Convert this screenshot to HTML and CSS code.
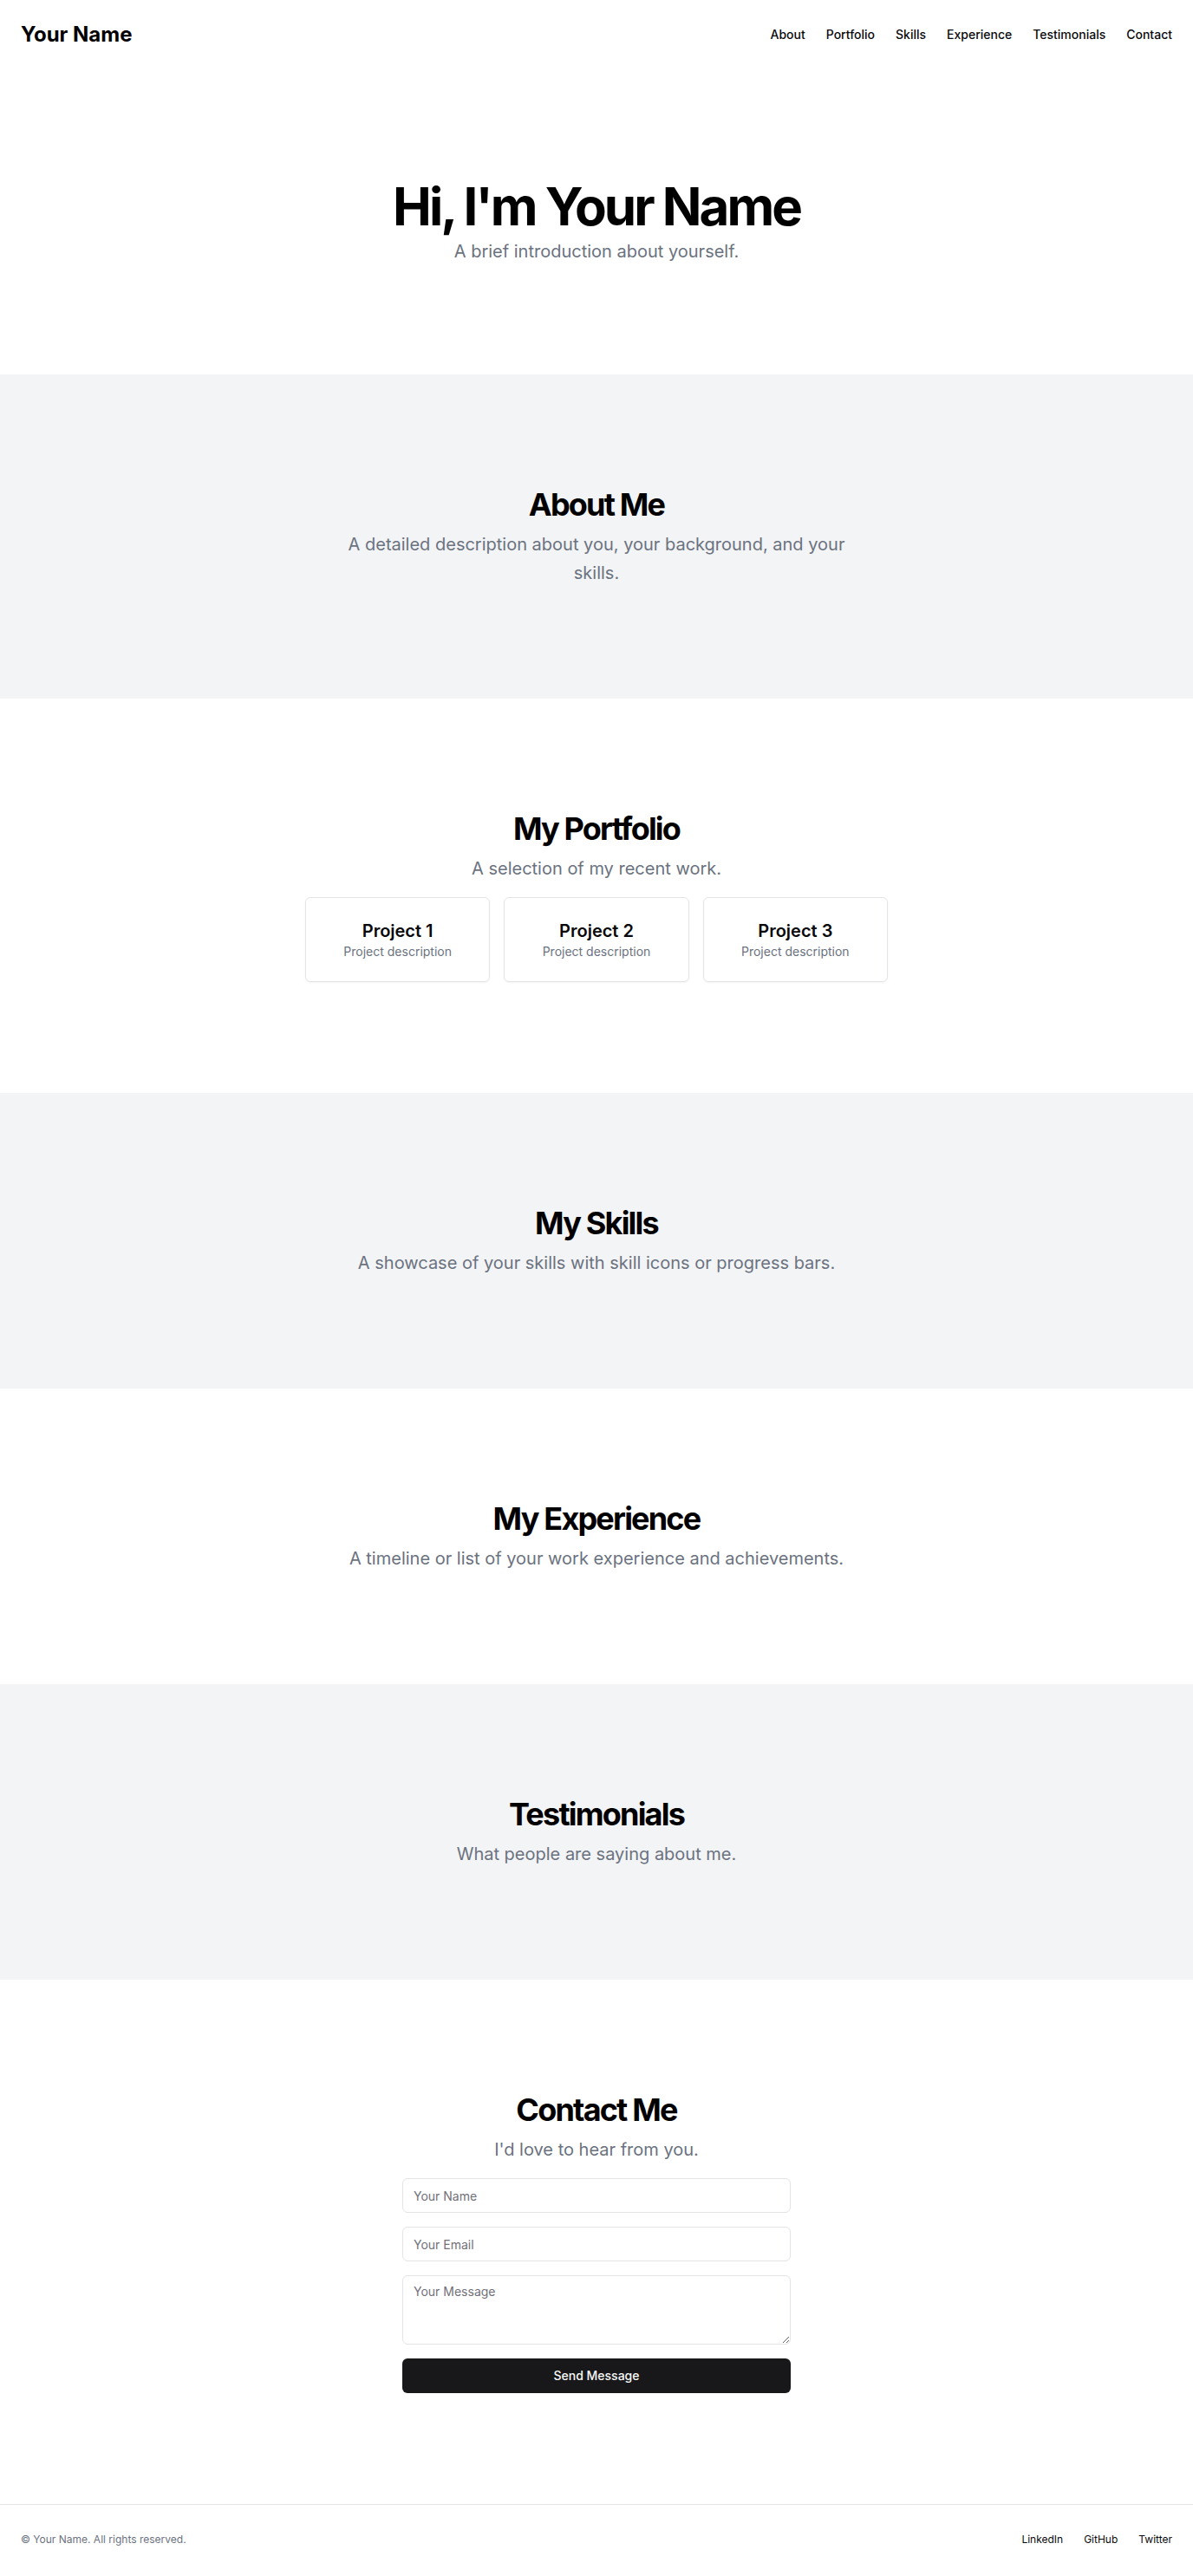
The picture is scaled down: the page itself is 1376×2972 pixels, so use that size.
FILE: index.html
```html
<!DOCTYPE html>
<html lang="en">
<head>
<meta charset="utf-8">
<meta name="viewport" content="width=device-width, initial-scale=1">
<title>Your Name</title>
<link rel="stylesheet" href="styles.css">
</head>
<body>
<header class="site-header">
  <a class="brand" href="#">Your Name</a>
  <nav class="nav">
    <a href="#about">About</a>
    <a href="#portfolio">Portfolio</a>
    <a href="#skills">Skills</a>
    <a href="#experience">Experience</a>
    <a href="#testimonials">Testimonials</a>
    <a href="#contact">Contact</a>
  </nav>
</header>
<main>
  <section class="section">
    <h1 class="hero-title">Hi, I'm Your Name</h1>
    <p class="hero-text">A brief introduction about yourself.</p>
  </section>
  <section class="section section-muted" id="about">
    <h2 class="title">About Me</h2>
    <p class="lead">A detailed description about you, your background, and your skills.</p>
  </section>
  <section class="section" id="portfolio">
    <h2 class="title">My Portfolio</h2>
    <p class="lead">A selection of my recent work.</p>
    <div class="projects">
      <article class="card"><h3 class="card-title">Project 1</h3><p class="card-text">Project description</p></article>
      <article class="card"><h3 class="card-title">Project 2</h3><p class="card-text">Project description</p></article>
      <article class="card"><h3 class="card-title">Project 3</h3><p class="card-text">Project description</p></article>
    </div>
  </section>
  <section class="section section-muted" id="skills">
    <h2 class="title">My Skills</h2>
    <p class="lead">A showcase of your skills with skill icons or progress bars.</p>
  </section>
  <section class="section" id="experience">
    <h2 class="title">My Experience</h2>
    <p class="lead">A timeline or list of your work experience and achievements.</p>
  </section>
  <section class="section section-muted" id="testimonials">
    <h2 class="title">Testimonials</h2>
    <p class="lead">What people are saying about me.</p>
  </section>
  <section class="section" id="contact">
    <h2 class="title">Contact Me</h2>
    <p class="lead">I'd love to hear from you.</p>
    <form class="form">
      <input class="field" type="text" placeholder="Your Name" aria-label="Your Name">
      <input class="field" type="email" placeholder="Your Email" aria-label="Your Email">
      <textarea class="field field-area" placeholder="Your Message" aria-label="Your Message"></textarea>
      <button class="submit" type="submit">Send Message</button>
    </form>
  </section>
</main>
<footer class="site-footer">
  <p class="copyright">© Your Name. All rights reserved.</p>
  <nav class="footer-nav">
    <a href="#">LinkedIn</a>
    <a href="#">GitHub</a>
    <a href="#">Twitter</a>
  </nav>
</footer>
</body>
</html>
```

FILE: styles.css
```css
*, *::before, *::after { box-sizing: border-box; }
body {
  margin: 0;
  background: #fff;
  color: #09090b;
  font-family: Inter, "Liberation Sans", sans-serif;
  font-size: 16px;
  line-height: 24px;
}
h1, h2, h3, p { margin: 0; }
a { color: inherit; text-decoration: none; }

.site-header {
  display: flex;
  align-items: center;
  justify-content: space-between;
  padding: 24px;
}
.brand { font-size: 24px; line-height: 32px; font-weight: 700; color: #000; }
.nav { display: flex; gap: 24px; font-size: 14px; line-height: 20px; font-weight: 500; }

.section {
  display: flex;
  flex-direction: column;
  align-items: center;
  padding: 128px 24px;
  text-align: center;
}
.section-muted { background: #f3f4f6; }
.hero-title { font-size: 60px; line-height: 60px; font-weight: 700; letter-spacing: -0.05em; color: #000; }
.title { font-size: 36px; line-height: 44px; font-weight: 700; letter-spacing: -0.05em; color: #000; }
.hero-text, .lead { max-width: 600px; margin-top: 8px; color: #6b7280; font-size: 20px; }
.hero-text { line-height: 28px; }
.lead { line-height: 33px; }

.projects {
  display: grid;
  grid-template-columns: repeat(3, 1fr);
  gap: 16px;
  width: 100%;
  max-width: 672px;
  margin-top: 16px;
}
.card {
  padding: 24px;
  border: 1px solid #e4e4e7;
  border-radius: 6px;
  box-shadow: 0 1px 2px rgb(0 0 0 / 5%);
}
.card-title { font-size: 20px; line-height: 28px; font-weight: 600; }
.card-text { color: #6b7280; font-size: 14px; line-height: 20px; }

.form { display: grid; gap: 16px; width: 100%; max-width: 448px; margin-top: 16px; }
.field {
  width: 100%;
  height: 40px;
  padding: 8px 12px;
  border: 1px solid #e4e4e7;
  border-radius: 6px;
  background: #fff;
  color: inherit;
  font: inherit;
  font-size: 14px;
  line-height: 20px;
}
.field::placeholder { color: #71717a; }
.field-area { display: block; height: auto; min-height: 80px; resize: vertical; }
.submit {
  height: 40px;
  border: 0;
  border-radius: 6px;
  background: #18181b;
  color: #fafafa;
  font: inherit;
  font-size: 14px;
  font-weight: 500;
}

.site-footer {
  display: flex;
  align-items: center;
  justify-content: space-between;
  padding: 32px 24px;
  border-top: 1px solid #e4e4e7;
  font-size: 12px;
  line-height: 16px;
}
.copyright { color: #6b7280; }
.footer-nav { display: flex; gap: 24px; }
```
